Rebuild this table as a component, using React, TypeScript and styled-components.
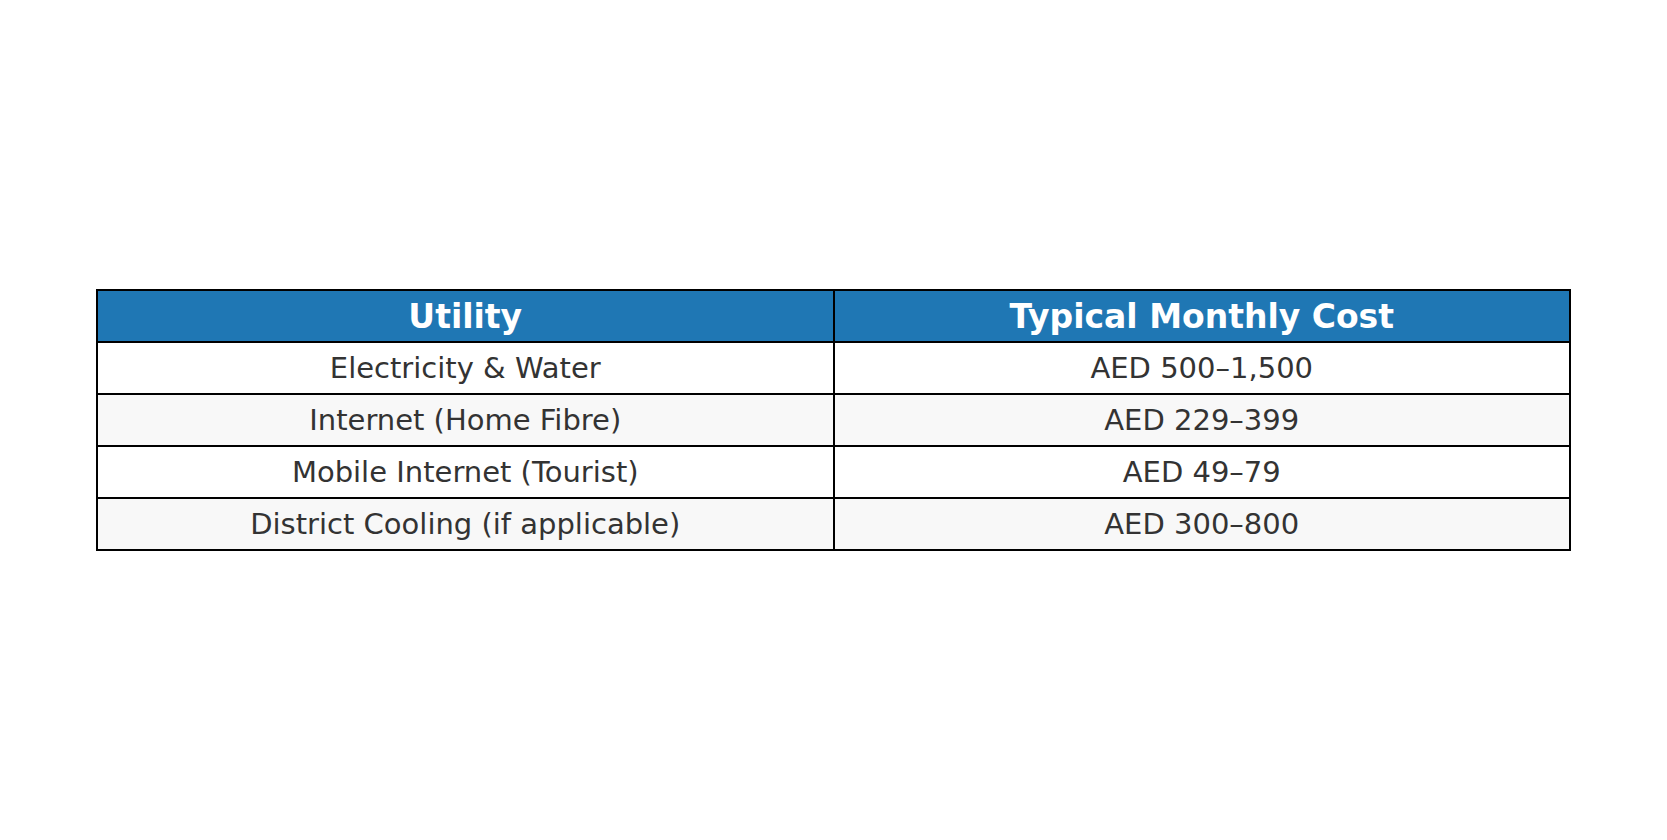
import React from 'react'
import styled, { createGlobalStyle } from 'styled-components'

const GlobalStyle = createGlobalStyle`
    html, body {
        margin: 0;
        padding: 0;
        background: #ffffff;
    }
    body {
        font-family: "DejaVu Sans", "Liberation Sans", sans-serif;
    }
`;

const Page = styled.div`
    width: 1667px;
    height: 840px;
    display: flex;
    justify-content: center;
    padding-top: 289px;
    box-sizing: border-box;
`;

const Table = styled.table`
    width: 1475px;
    height: fit-content;
    border-collapse: collapse;
    table-layout: fixed;
`;

const HeadCell = styled.th`
    height: 50px;
    padding: 0;
    background: #1f77b4;
    color: #ffffff;
    font-size: 33px;
    line-height: 1;
    font-weight: bold;
    text-align: center;
    border: 2px solid #000;
`;

const Row = styled.tr<{ $shaded: boolean }>`
    background: ${p => (p.$shaded ? '#f8f8f8' : '#ffffff')};
`;

const Cell = styled.td`
    height: 50px;
    padding: 0;
    color: #333333;
    font-size: 29px;
    line-height: 1;
    text-align: center;
    border: 2px solid #000;
`;

const rows = [
    ['Electricity & Water', 'AED 500–1,500'],
    ['Internet (Home Fibre)', 'AED 229–399'],
    ['Mobile Internet (Tourist)', 'AED 49–79'],
    ['District Cooling (if applicable)', 'AED 300–800'],
];

function App() {
    return (
    <>
        <GlobalStyle />
        <Page>
            <Table>
                <thead>
                    <tr>
                        <HeadCell>Utility</HeadCell>
                        <HeadCell>Typical Monthly Cost</HeadCell>
                    </tr>
                </thead>
                <tbody>
                    {rows.map((r, i) => (
                        <Row key={r[0]} $shaded={i % 2 === 1}>
                            <Cell>{r[0]}</Cell>
                            <Cell>{r[1]}</Cell>
                        </Row>
                    ))}
                </tbody>
            </Table>
        </Page>
    </>
    )
}

export default App;
